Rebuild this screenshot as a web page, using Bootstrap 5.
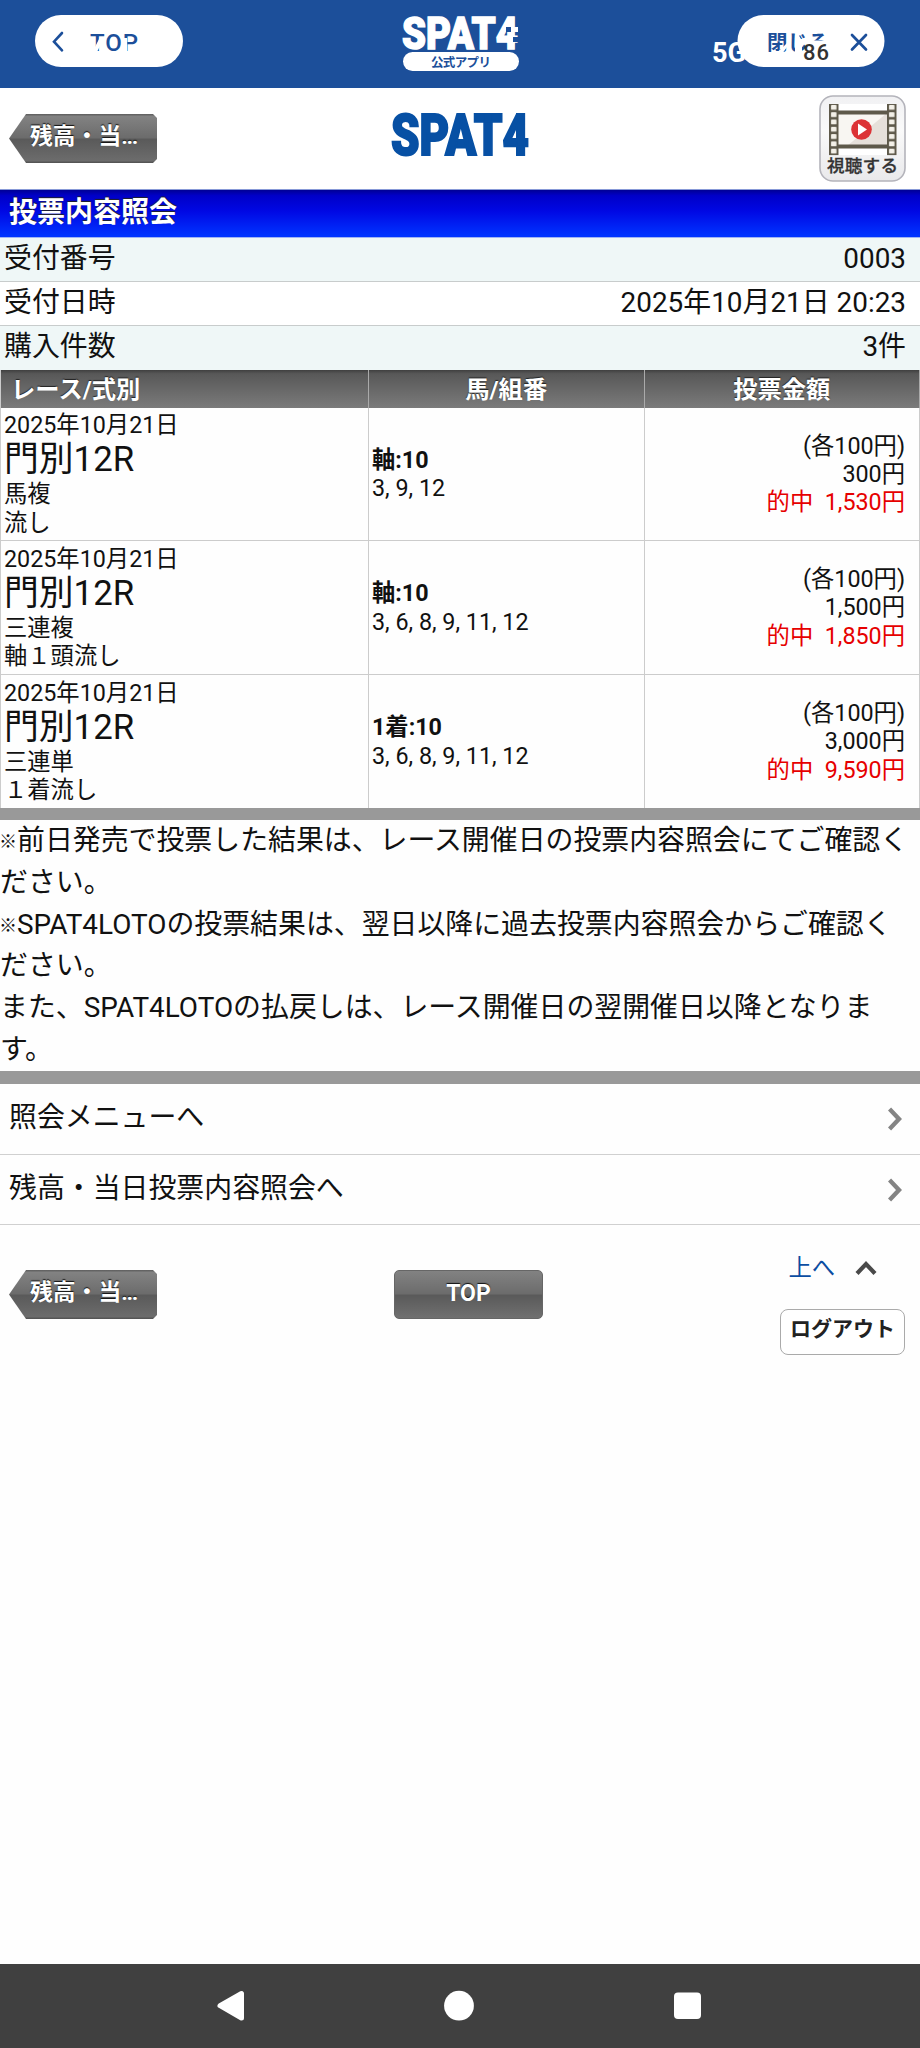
<!DOCTYPE html>
<html lang="ja">
<head>
<meta charset="utf-8">
<meta name="viewport" content="width=device-width, initial-scale=1">
<title>投票内容照会</title>
<link rel="stylesheet" href="https://cdn.jsdelivr.net/npm/bootstrap@5.3.0/dist/css/bootstrap.min.css">
<style>
body{font-family:Roboto,"Noto Sans CJK JP",sans-serif;font-size:27.9px;line-height:41.8px;color:#111;background:#fefefe;min-height:2048px}
.app-bar{height:88px;background:#1c4f9a}
.app-bar svg{height:88px}
.site-head{height:101px;padding:0 14px 0 9px;background:#fff}
.brand{margin-left:233px}
.page-title{height:49px;padding-left:9px;border-top:1px solid #889ad8;border-bottom:1px solid #9fb4f5;background:linear-gradient(#000095,#0000c8 12%,#0008e4 45%,#0033ff 97%);color:#fff;font-size:28px;font-weight:700;line-height:45px;text-shadow:0 -1px 1px #222}
.info-row{height:44px;padding:0 14px 0 4px;border-bottom:1px solid #c8cccc;line-height:41px;background:#fff}
.info-row.tint{background:#eff7f7}
.bets{table-layout:fixed;border-collapse:separate;border-spacing:0;border-left:1px solid #ccc;font-size:23.3px;line-height:28.2px}
.bets th{height:38px;padding:0;border-right:1px solid #aaa;background:linear-gradient(#3f3f3f,#585858 10%,#7b7b7b);color:#fff;font-size:24.3px;line-height:37px;text-shadow:0 -1px 1px #222}
.bets th:first-child{padding-left:10px}
.bets td{height:133px;padding:0 14px 0 3px;border-right:1px solid #ccc;border-bottom:1px solid #ccc;vertical-align:middle}
.bets tr:nth-child(2) td{height:134px}
.bets tr:last-child td{border-bottom:0}
.venue{font-size:34.8px;line-height:41px}
.hit{color:#e60000}
.divider{height:12px;background:#999}
.divider-lg{height:13px}
.notes{height:251px}
.kome{display:inline-block;width:17px;font-size:18px;font-weight:700;text-align:center;text-indent:-1px;vertical-align:2px;line-height:20px}
.menu-link{height:71px;padding:0 18px 0 9px;border-bottom:1px solid #d0d0d0;color:#111;text-decoration:none}
.menu-link+.menu-link{height:70px}
.menu-link span{margin-top:-2px}
.arrow-btn{width:148px;height:49px;color:#fff;font-size:22.8px;font-weight:700;line-height:45px;padding-left:21px;text-shadow:0 -1px 1px #111;text-decoration:none;background:linear-gradient(#5c5c5c,#828282 5%,#6c6c6c 48%,#5a5a5a 52%,#6c6c6c 95%,#505050);clip-path:polygon(0 50%,17px 0,144px 0,148px 4px,148px 45px,144px 100%,17px 100%)}
.arrow-btn:hover{color:#fff}
.dots{letter-spacing:-1.3px}
.top-btn{width:149px;height:49px;border:1px solid #666;border-radius:5px;color:#fff;font-size:23px;font-weight:700;line-height:45px;text-align:center;text-decoration:none;text-shadow:0 -1px 1px #111;background:linear-gradient(#828282,#6c6c6c 48%,#5a5a5a 52%,#707070)}
.foot{padding:28px 15px 0 9px;height:739px}
.foot .arrow-btn,.foot .top-btn{margin-top:17px}
.foot .top-btn{margin-left:237px}
.up-link{color:#0b4da2;font-size:23.3px;line-height:30px;text-decoration:none;padding-right:28px;gap:20px}
.logout{width:125px;height:46px;margin-top:26px;border:1.5px solid #aaa;border-radius:8px;color:#222;font-size:21px;font-weight:700;line-height:39px;text-align:center;text-decoration:none;background:#fff}
.sys-nav{height:84px;background:#404040}
</style>
</head>
<body>
<header class="app-bar">
<svg class="d-block w-100" viewBox="0 0 920 88">
<rect x="35" y="15" width="148" height="52" rx="26" fill="#fff"/>
<path d="M62 33l-8 8.700 8 8.700" fill="none" stroke="#1c4f9a" stroke-width="2.600" stroke-linecap="round"/>
<text x="90" y="50.500" font-size="24" font-weight="500" fill="#1c4f9a" textLength="48">TOP</text>
<path d="M100 37l-6 12v3h3l4-8zM123 38h4.200v13.500h-4.200z" fill="#fff"/>
<text x="402" y="49" font-size="44.500" font-weight="900" fill="#fff" stroke="#fff" stroke-width="1.500" textLength="116" lengthAdjust="spacingAndGlyphs">SPAT4</text>
<path d="M506 27h5v5h-5zM513 37h6v5h-6z" fill="#1c4f9a"/><path d="M513 27h5v5h-5z" fill="#fff"/>
<rect x="403" y="52" width="116" height="19" rx="9.500" fill="#fff"/>
<text x="431" y="66.500" font-size="12.500" font-weight="700" fill="#1c4f9a" textLength="60">公式アプリ</text>
<text x="712" y="62" font-size="28.500" font-weight="700" fill="#fff" textLength="34" lengthAdjust="spacingAndGlyphs">5G</text>
<rect x="737.500" y="15" width="147" height="52" rx="26" fill="#fff"/>
<text x="767" y="50" font-size="20.500" font-weight="700" fill="#1c4f9a">閉じる</text>
<path d="M777 53l10-10v4l-5 7zM798 34l-3 12v6h12V41l-6-2zM802 40.500h28v14h-28z" fill="#fff"/>
<text x="803" y="59.500" font-size="22" font-weight="500" fill="#333" textLength="26">86</text>
<path d="M852 35l14 14.500M866 35l-14 14.500" stroke="#1c4f9a" stroke-width="2.700" stroke-linecap="round"/>
</svg>
</header>

<div class="site-head d-flex align-items-center">
<a class="arrow-btn d-block" href="#">残高・当<span class="dots">...</span></a>
<svg class="brand" width="144" height="80" viewBox="0 0 144 80"><text x="1" y="56" font-size="56.500" font-weight="900" fill="#0750a4" stroke="#0750a4" stroke-width="2" textLength="138" lengthAdjust="spacingAndGlyphs">SPAT4</text></svg>
<svg class="ms-auto" width="87" height="87" viewBox="819 95 87 87">
<defs>
<linearGradient id="tile" x2="0" y2="1"><stop stop-color="#f1f1f3"/><stop offset=".4" stop-color="#fafafa"/><stop offset="1" stop-color="#e9e9eb"/></linearGradient>
<pattern id="holes" x="829" y="104" width="9.500" height="7.300" patternUnits="userSpaceOnUse"><rect width="9.500" height="7.300" fill="#5e594a"/><rect x="2" y="1" width="5.500" height="4.800" rx=".8" fill="#f3f0e8"/></pattern>
<pattern id="holesR" x="887" y="104" width="9.500" height="7.300" patternUnits="userSpaceOnUse"><rect width="9.500" height="7.300" fill="#5e594a"/><rect x="2" y="1" width="5.500" height="4.800" rx=".8" fill="#f3f0e8"/></pattern>
</defs>
<rect x="820" y="96" width="85" height="85" rx="13" fill="url(#tile)" stroke="#b4b4bb" stroke-width="1.600"/>
<path d="M838 104h49v51h-49z" fill="#fff"/><path d="M838 113h49v33h-49z" fill="#f8f6f2"/><path d="M887 113v33h-40z" fill="#e6e0da"/>
<path d="M838 112.500h49M838 146.500h49" stroke="#5e594a" stroke-width="3.800"/>
<path fill="url(#holes)" d="M829 104h9.500v51.100h-9.500z"/><path fill="url(#holesR)" d="M887 104h9.500v51.100h-9.500z"/>
<circle cx="861.500" cy="129.500" r="10.300" fill="#dc3336"/><path d="M858 123.500v12l9-6z" fill="#fff"/>
<text x="827" y="172" font-size="17.600" font-weight="500" fill="#333" stroke="#333" stroke-width=".3" textLength="71">視聴する</text>
</svg>
</div>

<h1 class="page-title m-0">投票内容照会</h1>
<div class="info-row tint d-flex justify-content-between"><span>受付番号</span><span>0003</span></div>
<div class="info-row d-flex justify-content-between"><span>受付日時</span><span>2025年10月21日 20:23</span></div>
<div class="info-row tint d-flex justify-content-between border-bottom-0"><span>購入件数</span><span>3件</span></div>

<table class="bets w-100">
<colgroup><col style="width:368px"><col style="width:275.500px"><col></colgroup>
<thead><tr><th>レース/式別</th><th class="text-center">馬/組番</th><th class="text-center">投票金額</th></tr></thead>
<tbody>
<tr><td>2025年10月21日<div class="venue">門別12R</div>馬複<br>流し</td><td><b>軸:10</b><br>3, 9, 12</td><td class="text-end">(各100円)<br>300円<br><span class="hit">的中&nbsp; 1,530円</span></td></tr>
<tr><td>2025年10月21日<div class="venue">門別12R</div>三連複<br>軸１頭流し</td><td><b>軸:10</b><br>3, 6, 8, 9, 11, 12</td><td class="text-end">(各100円)<br>1,500円<br><span class="hit">的中&nbsp; 1,850円</span></td></tr>
<tr><td>2025年10月21日<div class="venue">門別12R</div>三連単<br>１着流し</td><td><b>1着:10</b><br>3, 6, 8, 9, 11, 12</td><td class="text-end">(各100円)<br>3,000円<br><span class="hit">的中&nbsp; 9,590円</span></td></tr>
</tbody>
</table>

<div class="divider"></div>
<div class="notes text-nowrap"><span class="kome">※</span>前日発売で投票した結果は、レース開催日の投票内容照会にてご確認く<br>ださい。<br><span class="kome">※</span>SPAT4LOTOの投票結果は、翌日以降に過去投票内容照会からご確認く<br>ださい。<br>また、SPAT4LOTOの払戻しは、レース開催日の翌開催日以降となりま<br>す。</div>
<div class="divider divider-lg"></div>

<nav>
<a class="menu-link d-flex justify-content-between align-items-center" href="#"><span>照会メニューへ</span><svg width="14" height="24" viewBox="0 0 14 24"><path d="M1.500 2l9.500 10-9.500 10" fill="none" stroke="#848484" stroke-width="4.400"/></svg></a>
<a class="menu-link d-flex justify-content-between align-items-center" href="#"><span>残高・当日投票内容照会へ</span><svg width="14" height="24" viewBox="0 0 14 24"><path d="M1.500 2l9.500 10-9.500 10" fill="none" stroke="#848484" stroke-width="4.400"/></svg></a>
</nav>

<footer class="foot d-flex align-items-start">
<a class="arrow-btn d-block" href="#">残高・当<span class="dots">...</span></a>
<a class="top-btn d-block" href="#">TOP</a>
<div class="ms-auto d-flex flex-column align-items-end">
<a class="up-link d-flex align-items-center" href="#"><span>上へ</span><svg width="22" height="16" viewBox="0 0 22 16"><path d="M2 13.500l9-9.500 9 9.500" fill="none" stroke="#4a4a4a" stroke-width="4.200"/></svg></a>
<a class="logout d-block" href="#">ログアウト</a>
</div>
</footer>

<div class="sys-nav">
<svg class="d-block w-100" height="84" viewBox="0 1964 920 84" fill="#fff">
<path d="M220 2005.700L241.500 1993.500v24.500z" stroke="#fff" stroke-width="5" stroke-linejoin="round"/>
<circle cx="459" cy="2005.700" r="14.900"/>
<rect x="674" y="1992.500" width="27" height="26.500" rx="4"/>
</svg>
</div>
<script src="https://cdn.jsdelivr.net/npm/bootstrap@5.3.0/dist/js/bootstrap.bundle.min.js"></script>
</body>
</html>
